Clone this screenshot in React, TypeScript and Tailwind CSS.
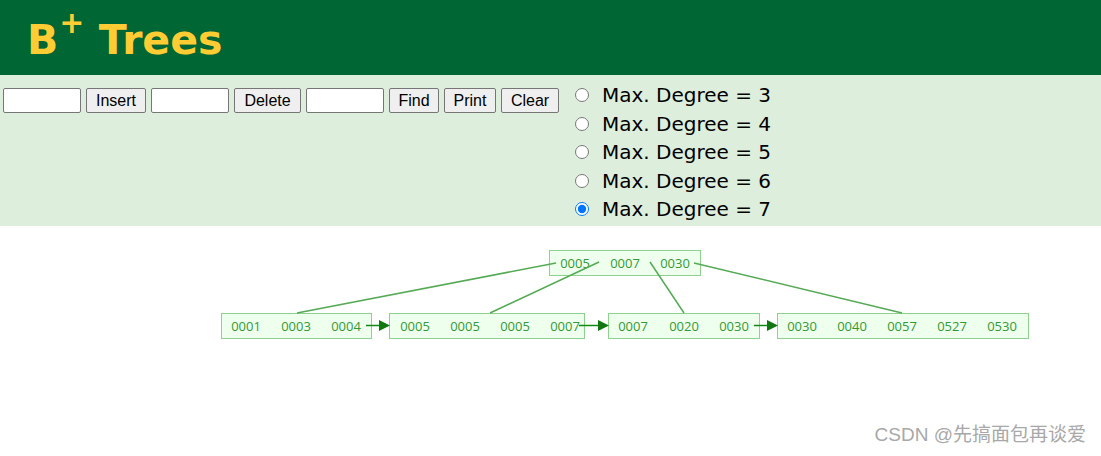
const inputCls =
  'w-[78px] h-[25px] border border-[#767676] rounded-[2px] bg-white px-1 text-[13px] outline-none';
const btnCls =
  'h-[25px] border border-[#767676] rounded-[2px] bg-[#efefef] text-[16px] text-black leading-none font-["Liberation_Sans",Arial,sans-serif]';

type Node = { x: number; y: number; w: number; keys: { k: string; cx: number }[] };

const root: Node = {
  x: 549,
  y: 250,
  w: 151,
  keys: [
    { k: '0005', cx: 575 },
    { k: '0007', cx: 625 },
    { k: '0030', cx: 675 },
  ],
};

const leaves: Node[] = [
  {
    x: 221,
    y: 313,
    w: 150,
    keys: [
      { k: '0001', cx: 246 },
      { k: '0003', cx: 296 },
      { k: '0004', cx: 346 },
    ],
  },
  {
    x: 389,
    y: 313,
    w: 195,
    keys: [
      { k: '0005', cx: 415 },
      { k: '0005', cx: 465 },
      { k: '0005', cx: 515 },
      { k: '0007', cx: 565 },
    ],
  },
  {
    x: 608,
    y: 313,
    w: 151,
    keys: [
      { k: '0007', cx: 633 },
      { k: '0020', cx: 684 },
      { k: '0030', cx: 734 },
    ],
  },
  {
    x: 777,
    y: 313,
    w: 251,
    keys: [
      { k: '0030', cx: 802 },
      { k: '0040', cx: 852 },
      { k: '0057', cx: 902 },
      { k: '0527', cx: 952 },
      { k: '0530', cx: 1002 },
    ],
  },
];

// parent -> child pointers, drawn over the boxes
const edges = [
  [556, 263, 297, 313],
  [599, 262, 490, 313],
  [650, 262, 684, 313],
  [694, 263, 902, 313],
];

const TreeNode = ({ n }: { n: Node }) => (
  <g>
    <rect x={n.x + 0.5} y={n.y + 0.5} width={n.w} height={25} fill="#eeffee" stroke="#8fd18f" />
    {n.keys.map((key, i) => (
      <text
        key={i}
        x={key.cx}
        y={n.y + 17.5}
        textAnchor="middle"
        fontSize="13"
        fill="#339933"
        fontFamily="'Open Sans', 'Noto Sans', sans-serif"
      >
        {key.k}
      </text>
    ))}
  </g>
);

const BTree = () => (
  <svg width="1101" height="230" viewBox="0 226 1101 230" className="block">
    <TreeNode n={root} />
    {leaves.map((n, i) => (
      <TreeNode key={i} n={n} />
    ))}
    {edges.map(([x1, y1, x2, y2], i) => (
      <line key={i} x1={x1} y1={y1} x2={x2} y2={y2} stroke="#55aa55" strokeWidth="1.5" />
    ))}
    {leaves.slice(0, -1).map((n, i) => {
      const x1 = n.x + n.w - 5;
      const x2 = leaves[i + 1].x;
      return (
        <g key={i}>
          <line x1={x1} y1={325.5} x2={x2 - 8} y2={325.5} stroke="#118811" strokeWidth="1.5" />
          <polygon points={`${x2 - 10},320 ${x2 + 1},325.5 ${x2 - 10},331`} fill="#117711" />
        </g>
      );
    })}
  </svg>
);

export default function App() {
  return (
    <div className="relative min-h-[456px] w-[1101px] bg-white">
      <header className="flex h-[75px] items-center bg-[#006633] pl-[27px] pt-[6px]">
        <h1 className='font-["DejaVu_Sans",Verdana,sans-serif] text-[41px] font-bold leading-none text-[#ffcc33]'>
          B
          <sup className="relative -top-[12px] ml-[1px] align-top text-[30px] leading-none">+</sup>{' '}
          Trees
        </h1>
      </header>

      <div className='flex h-[151px] items-start bg-[#ddeedd] pl-[3px] font-["Liberation_Sans",Arial,sans-serif]'>
        <div className="mt-[13px] flex gap-[5px]">
          <input className={inputCls} />
          <button className={`${btnCls} w-[60px]`}>Insert</button>
          <input className={inputCls} />
          <button className={`${btnCls} w-[67px]`}>Delete</button>
          <input className={inputCls} />
          <button className={`${btnCls} w-[50px]`}>Find</button>
          <button className={`${btnCls} w-[52px]`}>Print</button>
          <button className={`${btnCls} w-[58px]`}>Clear</button>
        </div>
        <div className="ml-[16px] mt-[6px] flex flex-col">
          {[3, 4, 5, 6, 7].map((d) => (
            <label key={d} className="flex h-[28.5px] items-center">
              <input
                type="radio"
                name="degree"
                defaultChecked={d === 7}
                className="m-0 h-[14px] w-[14px]"
              />
              <span className='ml-[13px] font-["DejaVu_Sans",Verdana,sans-serif] text-[20px] text-black'>
                Max. Degree = {d}
              </span>
            </label>
          ))}
        </div>
      </div>

      <BTree />

      <div className='absolute bottom-[7px] right-[15px] font-["Liberation_Sans","Noto_Sans_CJK_SC",sans-serif] text-[19px] text-[#a8a8a8]'>
        CSDN @先搞面包再谈爱
      </div>
    </div>
  );
}
